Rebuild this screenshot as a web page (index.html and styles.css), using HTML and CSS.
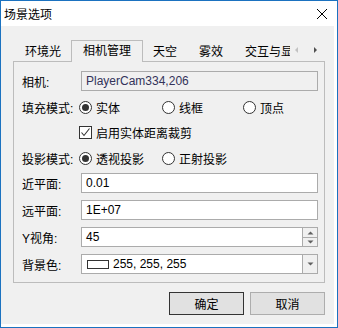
FILE: index.html
```html
<!DOCTYPE html>
<html>
<head>
<meta charset="utf-8">
<link rel="stylesheet" href="styles.css">
</head>
<body>
<div class="win">
  <div class="titlebar">
    <span class="title">场景选项</span>
    <svg class="close" width="10" height="10" viewBox="0 0 10 10"><path d="M0 0L10 10M10 0L0 10" stroke="#000" stroke-width="1"/></svg>
  </div>
  <div class="client">
    <div class="tabstrip">
      <div class="tabs">
        <div class="tab">环境光</div>
        <div class="tab active">相机管理</div>
        <div class="tab">天空</div>
        <div class="tab">雾效</div>
        <div class="tab">交互与显示</div>
      </div>
      <div class="scroll">
        <svg class="arr-l" width="3" height="6" viewBox="0 0 3 6"><polygon points="3,0 3,6 0,3" fill="#c2c2c2"/></svg>
        <svg class="arr-r" width="3" height="6" viewBox="0 0 3 6"><polygon points="0,0 0,6 3,3" fill="#505050"/></svg>
      </div>
    </div>
    <div class="panel">
      <div class="row r1">
        <span class="lbl">相机:</span>
        <div class="field disabled">PlayerCam334,206</div>
      </div>
      <div class="row r2">
        <span class="lbl">填充模式:</span>
        <div class="opts">
          <span class="opt"><span class="radio on"></span>实体</span>
          <span class="opt"><span class="radio"></span>线框</span>
          <span class="opt"><span class="radio"></span>顶点</span>
        </div>
      </div>
      <div class="row r3">
        <span class="lbl"></span>
        <div class="opts">
          <span class="opt"><span class="check"><svg width="11" height="11" viewBox="0 0 11 11"><path d="M1.5 5.5L4 8.5L9.5 1.5" fill="none" stroke="#333" stroke-width="1.1"/></svg></span>启用实体距离裁剪</span>
        </div>
      </div>
      <div class="row r4">
        <span class="lbl">投影模式:</span>
        <div class="opts">
          <span class="opt"><span class="radio on"></span>透视投影</span>
          <span class="opt"><span class="radio"></span>正射投影</span>
        </div>
      </div>
      <div class="row r5">
        <span class="lbl">近平面:</span>
        <div class="field">0.01</div>
      </div>
      <div class="row r6">
        <span class="lbl">远平面:</span>
        <div class="field">1E+07</div>
      </div>
      <div class="row r7">
        <span class="lbl">Y视角:</span>
        <div class="field spin">
          <span class="val">45</span>
          <span class="spinbox">
            <span class="sbtn"><svg width="7" height="4" viewBox="0 0 7 4"><polygon points="0.5,3.5 6.5,3.5 3.5,0.5" fill="#606060"/></svg></span>
            <span class="sbtn"><svg width="7" height="4" viewBox="0 0 7 4"><polygon points="0.5,0.5 6.5,0.5 3.5,3.5" fill="#606060"/></svg></span>
          </span>
        </div>
      </div>
      <div class="row r8">
        <span class="lbl">背景色:</span>
        <div class="field combo">
          <span class="swatch"></span>
          <span class="val">255, 255, 255</span>
          <span class="dropbtn"><svg width="7" height="4" viewBox="0 0 7 4"><polygon points="0.5,0.5 6.5,0.5 3.5,3.5" fill="#606060"/></svg></span>
        </div>
      </div>
    </div>
    <div class="buttons">
      <button class="btn default">确定</button>
      <button class="btn">取消</button>
    </div>
  </div>
</div>
</body>
</html>
```
FILE: styles.css
```css
html, body {
  margin: 0;
  padding: 0;
}
body {
  width: 338px;
  height: 328px;
  overflow: hidden;
  background: #fff;
  font-family: "Liberation Sans", "Noto Sans CJK SC", sans-serif;
  font-size: 12px;
  color: #000;
}
.win {
  box-sizing: border-box;
  width: 338px;
  height: 328px;
  border: 1px solid #1b72c0;
  background: #fff;
  display: flex;
  flex-direction: column;
}
.titlebar {
  flex: none;
  height: 25px;
  display: flex;
  align-items: center;
  justify-content: space-between;
  padding: 0 10px 0 3px;
}
.title {
  font-family: "Noto Sans CJK SC", sans-serif;
  line-height: 25px;
}
.client {
  flex: none;
  box-sizing: border-box;
  width: 333px;
  height: 298px;
  background: #f0f0f0;
  padding: 0 9px 0 12px;
}
.tabstrip {
  display: flex;
  margin-top: 14px;
  margin-bottom: -1px;
  height: 22px;
  position: relative;
  z-index: 1;
}
.tabs {
  margin-left: 1px;
  width: 276px;
  height: 22px;
  overflow: hidden;
  display: flex;
  align-items: flex-end;
  flex: none;
}
.tab {
  flex: none;
  box-sizing: border-box;
  height: 21px;
  padding: 2px 11px 0;
  line-height: 18px;
  white-space: nowrap;
}
.tab.active {
  height: 22px;
  padding: 0 11px;
  margin: 0 -1px;
  line-height: 20px;
  border: 1px solid #bcbcbc;
  border-bottom: none;
  background: #f0f0f0;
}
.scroll {
  flex: none;
  display: flex;
  align-items: flex-start;
  padding-top: 7px;
}
.arr-l { margin-left: 5px; }
.arr-r { margin-left: 16px; }
.panel {
  box-sizing: border-box;
  width: 312px;
  height: 222px;
  border: 1px solid #bcbcbc;
  padding: 0 6px 0 8px;
  display: flex;
  flex-direction: column;
}
.row {
  display: flex;
  align-items: center;
  height: 20px;
  flex: none;
}
.r1 { margin-top: 9px; }
.r2 { margin-top: 6px; }
.r3 { margin-top: 5px; }
.r4 { margin-top: 6px; }
.r5 { margin-top: 5px; }
.r6, .r7, .r8 { margin-top: 7px; }
.lbl {
  width: 57px;
  flex: none;
  white-space: nowrap;
}
.field {
  margin-left: 2px;
  flex: 1;
  box-sizing: border-box;
  height: 20px;
  border: 1px solid #ababab;
  background: #fff;
  padding: 0 4px;
  line-height: 18px;
  display: flex;
  align-items: center;
}
.field.disabled {
  background: #f0f0f0;
  color: #33335a;
}
.field .val { flex: 1; }
.field.spin, .field.combo {
  padding-right: 0;
}
.spinbox {
  flex: none;
  width: 15px;
  height: 18px;
  display: flex;
  flex-direction: column;
}
.sbtn {
  box-sizing: border-box;
  height: 9px;
  border-left: 1px solid #ababab;
  background: #f0f0f0;
  display: flex;
  align-items: center;
  justify-content: center;
}
.sbtn + .sbtn {
  border-top: 1px solid #ababab;
}
.swatch {
  flex: none;
  box-sizing: border-box;
  width: 22px;
  height: 9px;
  border: 1px solid #333;
  background: #fff;
  margin: 0 4px 0 1px;
}
.dropbtn {
  flex: none;
  box-sizing: border-box;
  width: 15px;
  height: 18px;
  border-left: 1px solid #ababab;
  background: #f0f0f0;
  display: flex;
  align-items: center;
  justify-content: center;
}
.opts {
  margin-left: 0;
  display: grid;
  grid-template-columns: 83px 81px auto;
  align-items: center;
}
.opt {
  display: flex;
  align-items: center;
  gap: 4px;
  white-space: nowrap;
}
.radio {
  flex: none;
  box-sizing: border-box;
  width: 13px;
  height: 13px;
  border: 1px solid #333;
  border-radius: 50%;
  background: #fff;
  display: flex;
  align-items: center;
  justify-content: center;
}
.radio.on::after {
  content: "";
  width: 7px;
  height: 7px;
  border-radius: 50%;
  background: #333;
}
.check {
  flex: none;
  box-sizing: border-box;
  width: 13px;
  height: 13px;
  border: 1px solid #333;
  background: #fff;
  display: flex;
}
.buttons {
  display: flex;
  justify-content: flex-end;
  gap: 6px;
  margin-top: 9px;
}
.btn {
  box-sizing: border-box;
  width: 75px;
  height: 23px;
  border: 1px solid #adadad;
  background: #e1e1e1;
  font-family: "Liberation Sans", "Noto Sans CJK SC", sans-serif;
  font-size: 12px;
  color: #000;
  padding: 0;
  margin: 0;
}
.btn.default {
  border-color: #333;
}
```
